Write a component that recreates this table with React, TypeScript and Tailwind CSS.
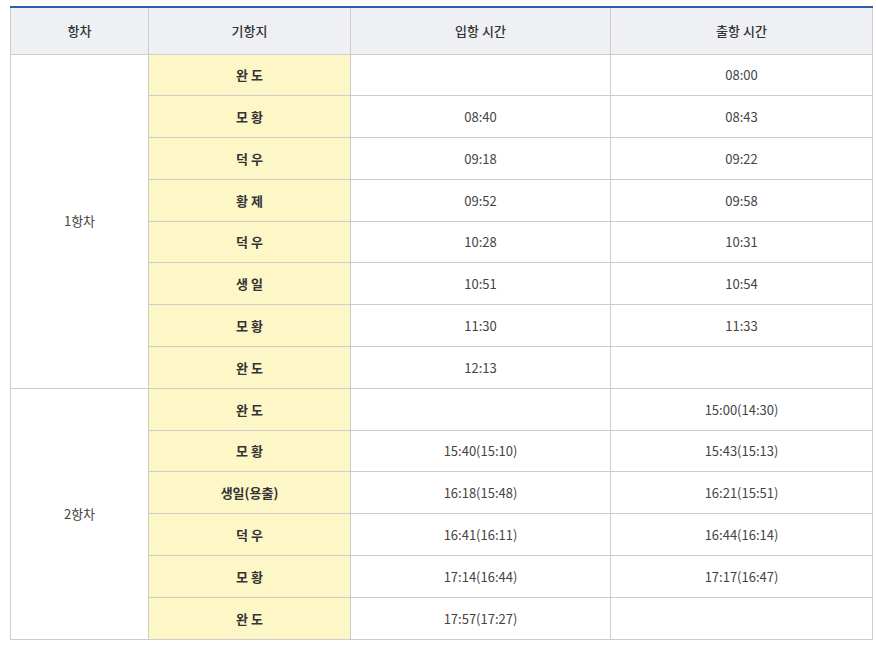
const trips = [
  {
    name: "1항차",
    stops: [
      ["완 도", "", "08:00"],
      ["모 황", "08:40", "08:43"],
      ["덕 우", "09:18", "09:22"],
      ["황 제", "09:52", "09:58"],
      ["덕 우", "10:28", "10:31"],
      ["생 일", "10:51", "10:54"],
      ["모 황", "11:30", "11:33"],
      ["완 도", "12:13", ""],
    ],
  },
  {
    name: "2항차",
    stops: [
      ["완 도", "", "15:00(14:30)"],
      ["모 황", "15:40(15:10)", "15:43(15:13)"],
      ["생일(용출)", "16:18(15:48)", "16:21(15:51)"],
      ["덕 우", "16:41(16:11)", "16:44(16:14)"],
      ["모 황", "17:14(16:44)", "17:17(16:47)"],
      ["완 도", "17:57(17:27)", ""],
    ],
  },
];

const App = () => {
  return (
    <div
      className="bg-white w-[876px] h-[646px] overflow-hidden pt-[6px] pl-[10px]"
      style={{ fontFamily: '"Noto Sans CJK KR", "Noto Sans", sans-serif' }}
    >
      <table className="border-collapse table-fixed w-[862px] border-t-2 border-t-[#2a5db0] text-[13px] text-[#444]">
        <colgroup>
          <col className="w-[138px]" />
          <col className="w-[202px]" />
          <col className="w-[260px]" />
          <col className="w-[262px]" />
        </colgroup>
        <thead>
          <tr className="h-[47px] bg-[#eef0f4] text-[#333]">
            <th className="border border-[#cccccc] font-medium">항차</th>
            <th className="border border-[#cccccc] font-medium">기항지</th>
            <th className="border border-[#cccccc] font-medium">입항 시간</th>
            <th className="border border-[#cccccc] font-medium">출항 시간</th>
          </tr>
        </thead>
        <tbody>
          {trips.map((trip) =>
            trip.stops.map((stop, i) => (
              <tr key={trip.name + i} className="h-[41.8px]">
                {i === 0 && (
                  <td
                    rowSpan={trip.stops.length}
                    className="border border-[#cccccc] text-center"
                  >
                    {trip.name}
                  </td>
                )}
                <td className="border border-[#cccccc] bg-[#fdf6c7] text-center font-bold text-[#333]">
                  {stop[0]}
                </td>
                <td className="border border-[#cccccc] text-center">{stop[1]}</td>
                <td className="border border-[#cccccc] text-center">{stop[2]}</td>
              </tr>
            ))
          )}
        </tbody>
      </table>
    </div>
  );
};

export default App;
